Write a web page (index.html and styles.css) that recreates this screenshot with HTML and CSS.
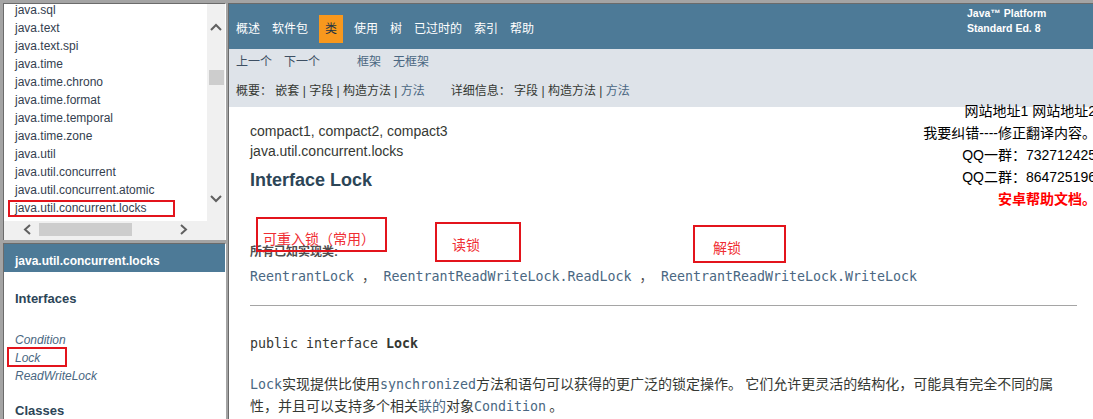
FILE: index.html
```html
<!DOCTYPE html>
<html lang="zh-CN">
<head>
<meta charset="utf-8">
<title>Lock (Java Platform SE 8)</title>
<link rel="stylesheet" href="styles.css">
</head>
<body>
<div class="frameset">
  <div class="left">
    <div class="pkgframe">
      <div class="pkgview">
        <ul class="pkglist">
          <li>java.sql</li>
          <li>java.text</li>
          <li>java.text.spi</li>
          <li>java.time</li>
          <li>java.time.chrono</li>
          <li>java.time.format</li>
          <li>java.time.temporal</li>
          <li>java.time.zone</li>
          <li>java.util</li>
          <li>java.util.concurrent</li>
          <li>java.util.concurrent.atomic</li>
          <li class="marked">java.util.concurrent.locks<span class="mark pkgmark"></span></li>
          <li>java.util.function</li>
        </ul>
      </div>
      <div class="vscroll">
        <svg class="arr-up" width="12" height="8" viewBox="0 0 12 8"><path d="M1 7 L6 2 L11 7" fill="none" stroke="#606060" stroke-width="2"/></svg>
        <div class="vthumb"></div>
        <svg class="arr-down" width="12" height="8" viewBox="0 0 12 8"><path d="M1 1 L6 6 L11 1" fill="none" stroke="#606060" stroke-width="2"/></svg>
      </div>
      <div class="hscroll">
        <svg class="arr-left" width="8" height="11" viewBox="0 0 8 11"><path d="M7 1 L2 5.5 L7 10" fill="none" stroke="#606060" stroke-width="2"/></svg>
        <div class="hthumb"></div>
        <svg class="arr-right" width="8" height="11" viewBox="0 0 8 11"><path d="M1 1 L6 5.5 L1 10" fill="none" stroke="#606060" stroke-width="2"/></svg>
      </div>
      <div class="corner"></div>
    </div>
    <div class="classframe">
      <h1 class="bar">java.util.concurrent.locks</h1>
      <div class="indexContainer">
        <h2>Interfaces</h2>
        <ul>
          <li><a>Condition</a></li>
          <li class="marked"><a>Lock</a><span class="mark lockmark"></span></li>
          <li><a>ReadWriteLock</a></li>
        </ul>
        <h2 class="classes">Classes</h2>
      </div>
    </div>
  </div>

  <div class="main">
    <div class="topNav">
      <ul class="navList">
        <li>概述</li>
        <li>软件包</li>
        <li class="current">类</li>
        <li>使用</li>
        <li>树</li>
        <li>已过时的</li>
        <li>索引</li>
        <li>帮助</li>
      </ul>
      <div class="aboutLanguage">Java™ Platform<br>Standard Ed. 8</div>
    </div>
    <div class="subNav">
      <div class="subRow">
        <ul class="navList">
          <li>上一个</li>
          <li>下一个</li>
        </ul>
        <ul class="navList frames">
          <li><a>框架</a></li>
          <li><a>无框架</a></li>
        </ul>
      </div>
      <div class="subRow second">
        <ul class="subNavList">
          <li>概要：&nbsp;</li>
          <li>嵌套&nbsp;|&nbsp;</li>
          <li>字段&nbsp;|&nbsp;</li>
          <li>构造方法&nbsp;|&nbsp;</li>
          <li><a>方法</a></li>
        </ul>
        <ul class="subNavList detail">
          <li>详细信息：&nbsp;</li>
          <li>字段&nbsp;|&nbsp;</li>
          <li>构造方法&nbsp;|&nbsp;</li>
          <li><a>方法</a></li>
        </ul>
      </div>
    </div>

    <div class="content">
      <div class="subTitle first">compact1, compact2, compact3</div>
      <div class="subTitle">java.util.concurrent.locks</div>
      <h2 class="title">Interface Lock</h2>

      <dl class="implList">
        <dt>所有已知实现类:</dt>
        <dd><a>ReentrantLock</a> ， <a>ReentrantReadWriteLock.ReadLock</a> ， <a>ReentrantReadWriteLock.WriteLock</a></dd>
      </dl>
      <hr>
      <pre class="decl">public interface <b>Lock</b></pre>
      <div class="block"><a class="code">Lock</a>实现提供比使用<span class="code link">synchronized</span>方法和语句可以获得的更广泛的锁定操作。 它们允许更灵活的结构化，可能具有完全不同的属性，并且可以支持多个相关<a>联的</a>对象<a class="code">Condition</a> 。</div>

      <div class="note note1">可重入锁（常用）</div>
      <div class="note note2">读锁</div>
      <div class="note note3">解锁</div>
    </div>

    <div class="sitebox">
      <div>网站地址1 网站地址2</div>
      <div>我要纠错----修正翻译内容。</div>
      <div>QQ一群：732712425</div>
      <div>QQ二群：864725196</div>
      <div class="red">安卓帮助文档。</div>
    </div>
  </div>
</div>
</body>
</html>
```

FILE: styles.css
```css
* { box-sizing: border-box; }

html, body {
  margin: 0;
  padding: 0;
}

body {
  width: 1093px;
  height: 419px;
  overflow: hidden;
  background: #a4a4a4;
  font-family: "Liberation Sans", Arial, "Noto Sans CJK SC", sans-serif;
  color: #353833;
}

a { color: #4A6782; text-decoration: none; }

.frameset {
  display: flex;
  height: 419px;
  padding: 3px 0 0 3px;
}

/* ---------- left frames ---------- */
.left {
  width: 223px;
  display: flex;
  flex-direction: column;
  gap: 3px;
}

.pkgframe {
  height: 237px;
  border-top: 1px solid #6b6b6b;
  border-left: 1px solid #6b6b6b;
  border-right: 1px solid #ffffff;
  padding-bottom: 2px;
  background: #f0f0f0;
  display: grid;
  grid-template-columns: 203px 18px;
  grid-template-rows: 217px 17px;
}

.pkgview {
  background: #fff;
  overflow: hidden;
}

.pkglist {
  list-style: none;
  margin: -3px 0 0;
  padding: 0 0 0 11px;
  font-size: 12px;
  line-height: 18px;
  color: #34404f;
  white-space: nowrap;
}

.marked { position: relative; }

.mark {
  position: absolute;
  border: 2px solid #e3141c;
}

.pkgmark {
  left: -7px;
  top: 1px;
  width: 167px;
  height: 17px;
}

.vscroll {
  background: #f0f0f0;
  display: flex;
  flex-direction: column;
  align-items: center;
}
.arr-up { margin-top: 19px; display: block; }
.vthumb { margin-top: 39px; width: 15px; height: 15px; background: #cdcdcd; }
.arr-down { margin-top: 110px; display: block; }

.hscroll {
  background: #f0f0f0;
  display: flex;
  align-items: center;
}
.arr-left { margin-left: 19px; display: block; }
.hthumb { margin-left: 8px; width: 93px; height: 13px; background: #cdcdcd; }
.arr-right { margin-left: 48px; display: block; }

.corner { background: #f0f0f0; }

.classframe {
  flex: 1;
  background: #fff;
  border-top: 1px solid #6b6b6b;
  border-left: 1px solid #6b6b6b;
  border-right: 1px solid #ffffff;
}

.bar {
  margin: 0;
  height: 28px;
  padding: 10px 0 0 11px;
  background: #4D7A97;
  color: #fff;
  font-size: 12px;
  line-height: 14px;
  font-weight: bold;
}

.indexContainer {
  padding-left: 11px;
}

.indexContainer h2 {
  margin: 19px 0 0;
  font-size: 13px;
  line-height: 16px;
  font-weight: bold;
  color: #2c4557;
}

.indexContainer ul {
  list-style: none;
  margin: 24px 0 0;
  padding: 0;
  font-size: 12px;
  line-height: 18px;
}

.indexContainer li a { font-style: italic; }

.indexContainer h2.classes { margin-top: 18px; }

.lockmark {
  left: -8px;
  top: -2px;
  width: 60px;
  height: 20px;
}

/* ---------- right frame ---------- */
.main {
  flex: 1;
  margin-left: 2px;
  border-top: 1px solid #6b6b6b;
  border-left: 1px solid #6b6b6b;
  background: #fff;
  position: relative;
  overflow: hidden;
}

.topNav {
  height: 45px;
  background: #4D7A97;
  color: #fff;
  display: flex;
  justify-content: space-between;
  align-items: flex-start;
}

.navList {
  display: flex;
  list-style: none;
  margin: 0;
  padding: 0 0 0 1px;
  font-size: 12px;
  line-height: 18px;
  font-family: "Liberation Sans", "Noto Sans CJK SC", sans-serif;
}

.topNav .navList { padding-top: 11px; }

.navList li { padding: 5px 6px; }

.navList li.current {
  background: #F8981D;
  color: #253441;
  margin: 0 5px;
}

.aboutLanguage {
  width: 80px;
  margin: 2px 46px 0 0;
  font-size: 10.5px;
  line-height: 14.5px;
  font-weight: bold;
  white-space: nowrap;
}

.subNav {
  height: 58px;
  background: #dee3e9;
  padding-top: 4px;
  font-size: 12px;
  line-height: 18px;
  font-family: "Liberation Sans", "Noto Sans CJK SC", sans-serif;
}

.subRow { display: flex; }

.subNav .navList li { padding: 0 6px; color: #3d4f63; }

.subNav .navList.frames { margin-left: 25px; padding-left: 0; }

.subRow.second {
  margin-top: 11px;
  padding-left: 7px;
}

.subNavList {
  display: flex;
  list-style: none;
  margin: 0;
  padding: 0;
  white-space: pre;
}

.subNavList.detail { margin-left: 26px; }

/* ---------- content ---------- */
.content {
  position: relative;
  padding: 14px 16px 0 21px;
}

.subTitle {
  font-size: 14px;
  line-height: 20px;
}

.title {
  margin: 8px 0 0;
  font-size: 18px;
  line-height: 22px;
  font-weight: bold;
  color: #2c4557;
}

.implList { margin: 53px 0 0; }

.implList dt {
  font-size: 12px;
  line-height: 16px;
  font-weight: bold;
  color: #4E4E4E;
}

.implList dd {
  margin: 8px 0 0;
  font-family: "DejaVu Sans Mono", "Noto Sans CJK SC", monospace;
  font-size: 13.3px;
  line-height: 18px;
  color: #4E4E4E;
  white-space: pre;
}

hr {
  margin: 19px 0 0;
  border: 0;
  border-top: 1px solid #a5a5a5;
  height: 0;
}

.decl {
  margin: 29px 0 0;
  font-family: "DejaVu Sans Mono", monospace;
  font-size: 13.3px;
  line-height: 18px;
  color: #353833;
}

.block {
  margin-top: 20px;
  padding-right: 20px;
  font-family: "Noto Sans CJK SC", sans-serif;
  font-size: 14px;
  line-height: 20px;
  color: #353833;
}

.code {
  font-family: "DejaVu Sans Mono", monospace;
  font-size: 13.3px;
}

.link { color: #4A6782; }

/* red annotation boxes drawn over the page */
.note {
  position: absolute;
  border: 2px solid #e3141c;
  color: #ef2d33;
  font-family: "Noto Sans CJK SC", sans-serif;
  font-size: 14px;
  line-height: 20px;
  white-space: nowrap;
}

.note1 { left: 27px;  top: 110px; width: 131px; height: 35px; padding: 9px 0 0 5px; }
.note2 { left: 206px; top: 115px; width: 86px;  height: 40px; padding: 10px 0 0 15px; }
.note3 { left: 464px; top: 118px; width: 93px;  height: 38px; padding: 10px 0 0 18px; }

/* floating site box */
.sitebox {
  position: absolute;
  top: 96px;
  right: -3px;
  text-align: right;
  font-family: "Liberation Sans", "Noto Sans CJK SC", sans-serif;
  font-size: 14px;
  line-height: 22px;
  color: #000;
  white-space: nowrap;
}

.sitebox .red { color: #ff0000; font-weight: bold; }
```
